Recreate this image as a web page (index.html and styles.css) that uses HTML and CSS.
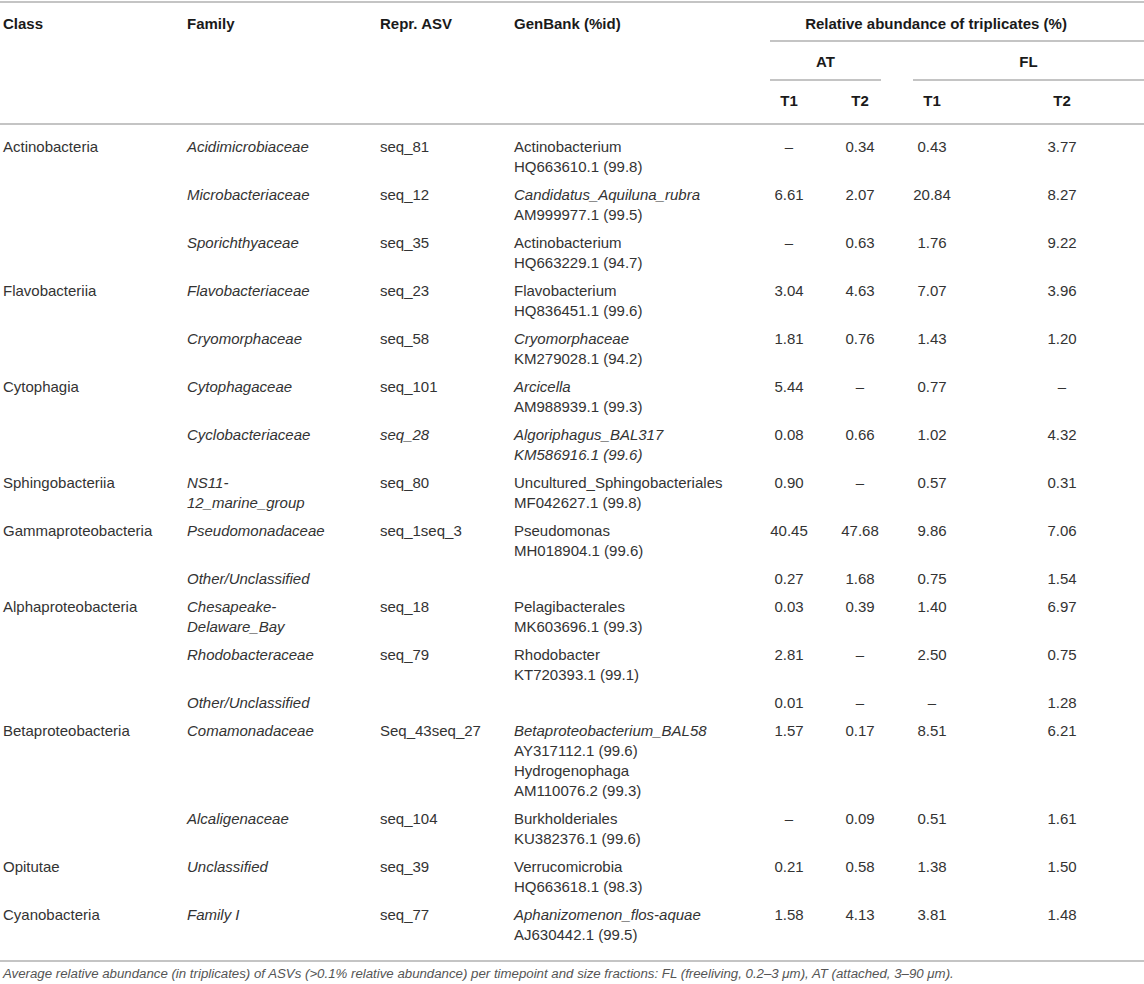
FILE: index.html
```html
<!DOCTYPE html>
<html lang="en">
<head>
<meta charset="utf-8">
<title>Relative abundance table</title>
<link rel="stylesheet" href="styles.css">
</head>
<body>
<div class="wrap">
<table class="data">
  <colgroup>
    <col class="c-class">
    <col class="c-family">
    <col class="c-asv">
    <col class="c-gb">
    <col class="c-at1">
    <col class="c-at2">
    <col class="c-fl1">
    <col class="c-fl2">
  </colgroup>
  <thead>
    <tr>
      <th rowspan="3" class="hs">Class</th>
      <th rowspan="3" class="hs">Family</th>
      <th rowspan="3" class="hs">Repr. ASV</th>
      <th rowspan="3" class="hs">GenBank (%id)</th>
      <th colspan="4" class="grp-cell"><div class="grp-rel">Relative abundance of triplicates (%)</div></th>
    </tr>
    <tr>
      <th colspan="2" class="grp-cell"><div class="grp-at">AT</div></th>
      <th colspan="2" class="grp-cell"><div class="grp-fl">FL</div></th>
    </tr>
    <tr class="tt">
      <th class="num">T1</th>
      <th class="num">T2</th>
      <th class="num">T1</th>
      <th class="num last">T2</th>
    </tr>
  </thead>
  <tbody>
    <tr class="first">
      <td>Actinobacteria</td><td><i>Acidimicrobiaceae</i></td><td>seq_81</td>
      <td>Actinobacterium<br>HQ663610.1 (99.8)</td>
      <td class="num">–</td><td class="num">0.34</td><td class="num">0.43</td><td class="num last">3.77</td>
    </tr>
    <tr>
      <td></td><td><i>Microbacteriaceae</i></td><td>seq_12</td>
      <td><i>Candidatus_Aquiluna_rubra</i><br>AM999977.1 (99.5)</td>
      <td class="num">6.61</td><td class="num">2.07</td><td class="num">20.84</td><td class="num last">8.27</td>
    </tr>
    <tr>
      <td></td><td><i>Sporichthyaceae</i></td><td>seq_35</td>
      <td>Actinobacterium<br>HQ663229.1 (94.7)</td>
      <td class="num">–</td><td class="num">0.63</td><td class="num">1.76</td><td class="num last">9.22</td>
    </tr>
    <tr>
      <td>Flavobacteriia</td><td><i>Flavobacteriaceae</i></td><td>seq_23</td>
      <td>Flavobacterium<br>HQ836451.1 (99.6)</td>
      <td class="num">3.04</td><td class="num">4.63</td><td class="num">7.07</td><td class="num last">3.96</td>
    </tr>
    <tr>
      <td></td><td><i>Cryomorphaceae</i></td><td>seq_58</td>
      <td><i>Cryomorphaceae</i><br>KM279028.1 (94.2)</td>
      <td class="num">1.81</td><td class="num">0.76</td><td class="num">1.43</td><td class="num last">1.20</td>
    </tr>
    <tr>
      <td>Cytophagia</td><td><i>Cytophagaceae</i></td><td>seq_101</td>
      <td><i>Arcicella</i><br>AM988939.1 (99.3)</td>
      <td class="num">5.44</td><td class="num">–</td><td class="num">0.77</td><td class="num last">–</td>
    </tr>
    <tr>
      <td></td><td><i>Cyclobacteriaceae</i></td><td><i>seq_28</i></td>
      <td><i>Algoriphagus_BAL317<br>KM586916.1 (99.6)</i></td>
      <td class="num">0.08</td><td class="num">0.66</td><td class="num">1.02</td><td class="num last">4.32</td>
    </tr>
    <tr>
      <td>Sphingobacteriia</td><td><i>NS11-<br>12_marine_group</i></td><td>seq_80</td>
      <td>Uncultured_Sphingobacteriales<br>MF042627.1 (99.8)</td>
      <td class="num">0.90</td><td class="num">–</td><td class="num">0.57</td><td class="num last">0.31</td>
    </tr>
    <tr>
      <td>Gammaproteobacteria</td><td><i>Pseudomonadaceae</i></td><td>seq_1seq_3</td>
      <td>Pseudomonas<br>MH018904.1 (99.6)</td>
      <td class="num">40.45</td><td class="num">47.68</td><td class="num">9.86</td><td class="num last">7.06</td>
    </tr>
    <tr>
      <td></td><td><i>Other/Unclassified</i></td><td></td>
      <td></td>
      <td class="num">0.27</td><td class="num">1.68</td><td class="num">0.75</td><td class="num last">1.54</td>
    </tr>
    <tr>
      <td>Alphaproteobacteria</td><td><i>Chesapeake-<br>Delaware_Bay</i></td><td>seq_18</td>
      <td>Pelagibacterales<br>MK603696.1 (99.3)</td>
      <td class="num">0.03</td><td class="num">0.39</td><td class="num">1.40</td><td class="num last">6.97</td>
    </tr>
    <tr>
      <td></td><td><i>Rhodobacteraceae</i></td><td>seq_79</td>
      <td>Rhodobacter<br>KT720393.1 (99.1)</td>
      <td class="num">2.81</td><td class="num">–</td><td class="num">2.50</td><td class="num last">0.75</td>
    </tr>
    <tr>
      <td></td><td><i>Other/Unclassified</i></td><td></td>
      <td></td>
      <td class="num">0.01</td><td class="num">–</td><td class="num">–</td><td class="num last">1.28</td>
    </tr>
    <tr>
      <td>Betaproteobacteria</td><td><i>Comamonadaceae</i></td><td>Seq_43seq_27</td>
      <td><i>Betaproteobacterium_BAL58</i><br>AY317112.1 (99.6)<br>Hydrogenophaga<br>AM110076.2 (99.3)</td>
      <td class="num">1.57</td><td class="num">0.17</td><td class="num">8.51</td><td class="num last">6.21</td>
    </tr>
    <tr>
      <td></td><td><i>Alcaligenaceae</i></td><td>seq_104</td>
      <td>Burkholderiales<br>KU382376.1 (99.6)</td>
      <td class="num">–</td><td class="num">0.09</td><td class="num">0.51</td><td class="num last">1.61</td>
    </tr>
    <tr>
      <td>Opitutae</td><td><i>Unclassified</i></td><td>seq_39</td>
      <td>Verrucomicrobia<br>HQ663618.1 (98.3)</td>
      <td class="num">0.21</td><td class="num">0.58</td><td class="num">1.38</td><td class="num last">1.50</td>
    </tr>
    <tr class="final">
      <td>Cyanobacteria</td><td><i>Family I</i></td><td>seq_77</td>
      <td><i>Aphanizomenon_flos-aquae</i><br>AJ630442.1 (99.5)</td>
      <td class="num">1.58</td><td class="num">4.13</td><td class="num">3.81</td><td class="num last">1.48</td>
    </tr>
  </tbody>
</table>
<p class="caption">Average relative abundance (in triplicates) of ASVs (&gt;0.1% relative abundance) per timepoint and size fractions: FL (freeliving, 0.2–3 μm), AT (attached, 3–90 μm).</p>
</div>
</body>
</html>
```
FILE: styles.css
```css
html, body {
  margin: 0;
  padding: 0;
  background: #ffffff;
}

.wrap {
  width: 1144px;
  padding-top: 1px;
  font-family: "Liberation Sans", Arial, Helvetica, sans-serif;
  color: #333333;
}

.data {
  width: 1144px;
  table-layout: fixed;
  border-collapse: separate;
  border-spacing: 0;
  border-top: 2px solid #c4c4c4;
  font-size: 15px;
}

.c-class { width: 184px; }
.c-family { width: 193px; }
.c-asv { width: 134px; }
.c-gb { width: 249px; }
.c-at1 { width: 58px; }
.c-at2 { width: 84px; }
.c-fl1 { width: 60px; }
.c-fl2 { width: 182px; }

.data th {
  font-weight: bold;
  color: #1a1a1a;
  line-height: 22px;
  text-align: left;
  vertical-align: top;
  padding: 0 0 0 3px;
}

.data th.hs {
  padding-top: 10px;
  border-bottom: 2px solid #c4c4c4;
}

.data th.grp-cell {
  padding: 0;
  vertical-align: bottom;
}

.grp-rel {
  margin-left: 10px;
  padding: 10px 42px 5px 0;
  text-align: center;
  border-bottom: 2px solid #c4c4c4;
}

.grp-at {
  margin: 0 21px 0 10px;
  padding: 9px 0 6px;
  text-align: center;
  border-bottom: 2px solid #c4c4c4;
}

.grp-fl {
  margin-left: 11px;
  padding: 9px 0 6px;
  text-align: center;
  border-bottom: 2px solid #c4c4c4;
}

.data tr.tt th {
  padding-top: 9px;
  padding-bottom: 11px;
  border-bottom: 2px solid #c4c4c4;
}

.data th.num,
.data td.num {
  text-align: center;
  padding-left: 0;
}

.data th.num.last,
.data td.num.last {
  padding-left: 18px;
}

.data td {
  line-height: 20px;
  padding: 4px 0 4px 3px;
  vertical-align: top;
  white-space: nowrap;
}

.data td i {
  font-style: italic;
}

.data tr.first td {
  padding-top: 12px;
}

.data tr.final td {
  padding-bottom: 15px;
  border-bottom: 2px solid #c4c4c4;
}

.caption {
  margin: 0;
  padding: 4px 0 0 3px;
  font-size: 13.25px;
  line-height: 16px;
  font-style: italic;
  color: #555555;
}
```
